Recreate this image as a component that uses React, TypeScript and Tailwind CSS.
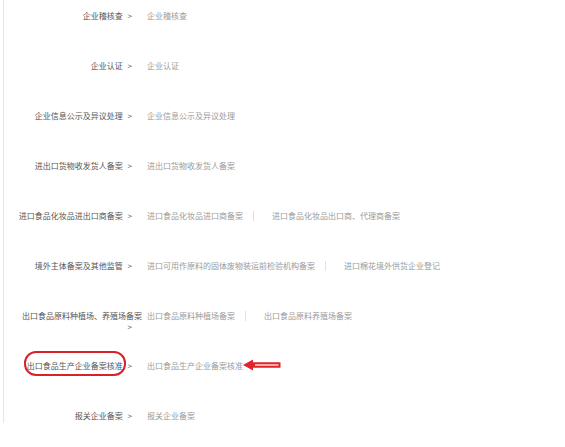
import React from "react";

type Row = {
  label: string;
  values: string[];
  marked?: boolean;
};

const rows: Row[] = [
  { label: "企业稽核查", values: ["企业稽核查"] },
  { label: "企业认证", values: ["企业认证"] },
  { label: "企业信息公示及异议处理", values: ["企业信息公示及异议处理"] },
  { label: "进出口货物收发货人备案", values: ["进出口货物收发货人备案"] },
  {
    label: "进口食品化妆品进出口商备案",
    values: ["进口食品化妆品进口商备案", "进口食品化妆品出口商、代理商备案"],
  },
  {
    label: "境外主体备案及其他监管",
    values: ["进口可用作原料的固体废物装运前检验机构备案", "进口棉花境外供货企业登记"],
  },
  {
    label: "出口食品原料种植场、养殖场备案",
    values: ["出口食品原料种植场备案", "出口食品原料养殖场备案"],
  },
  { label: "出口食品生产企业备案核准", values: ["出口食品生产企业备案核准"], marked: true },
  { label: "报关企业备案", values: ["报关企业备案"] },
];

function LeftArrow() {
  return (
    <svg width="38" height="12" viewBox="0 0 38 12" className="inline-block align-middle -mt-[1px]">
      <polygon
        points="0,6 10,0.5 10,3.3 37.5,3.3 37.5,8.7 10,8.7 10,11.5"
        fill="#e0242c"
      />
      <rect x="12" y="5.1" width="23.5" height="1.8" fill="#f4b8bb" />
    </svg>
  );
}

export default function App() {
  return (
    <div
      className="bg-white w-[565px] h-[447px] text-[8px] leading-[11px]"
      style={{ fontFamily: '"Noto Sans CJK SC", "Noto Sans", sans-serif' }}
    >
      <div className="ml-[3px] h-[423px] border-l border-[#e6e6e6]">
        {rows.map((row, i) => (
          <div
            key={row.label}
            className={`flex items-start pt-[10px] ${i === rows.length - 1 ? "h-[23px]" : "h-[50px]"}`}
          >
            <div className="ml-[8px] w-[130px] shrink-0 text-right text-[#555555]">
              {row.marked ? (
                <span className="relative inline-block">
                  {row.label}
                  <span className="absolute -left-[3px] -right-[3px] -top-[9px] -bottom-[5px] rounded-[12px] border-2 border-[#d8222a]" />
                </span>
              ) : (
                row.label
              )}{" "}
              <span className="ml-[3px] mr-[10px]">&gt;</span>
            </div>
            <div className="ml-[5px] flex items-center whitespace-nowrap text-[#9a9a9a]">
              {row.values.map((v, j) => (
                <React.Fragment key={v}>
                  {j > 0 && <span className="ml-[10px] mr-[18px] h-[10px] w-px bg-[#e2e2e2]" />}
                  <span>{v}</span>
                </React.Fragment>
              ))}
              {row.marked && <LeftArrow />}
            </div>
          </div>
        ))}
      </div>
    </div>
  );
}
